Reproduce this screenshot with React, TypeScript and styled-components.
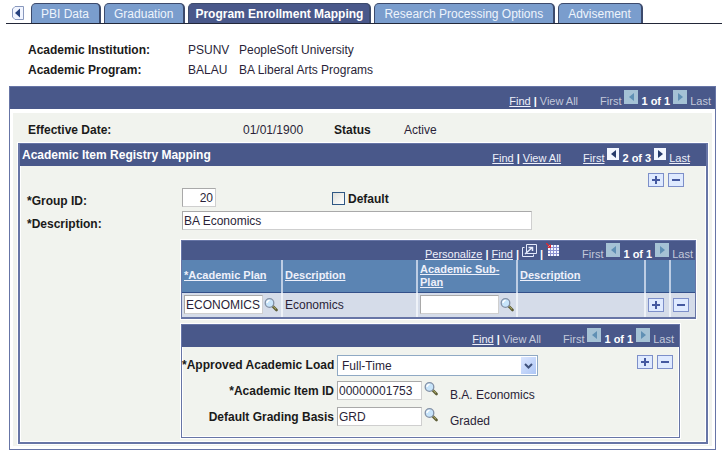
import React from "react";
import styled, { createGlobalStyle, css } from "styled-components";

const NAVY = "#49588a";
const EDGE = "#6775a6";
const PAPER = "#f1f3ee";

const GlobalStyle = createGlobalStyle`
  * { box-sizing: border-box; }
  body {
    margin: 0;
    background: #fff;
    color: #2a1f38;
    font: 12px/16px "Liberation Sans", Arial, sans-serif;
  }
  input, select, button { font: inherit; color: inherit; margin: 0; }
`;

const Page = styled.div`
  padding: 3px 3px 0 6px;
`;

const TabBar = styled.nav`
  display: flex;
  align-items: flex-end;
  gap: 3px;
  height: 21px;
  border-bottom: 1px solid #222738;
`;

const ScrollButton = styled.button`
  display: flex;
  align-self: flex-start;
  margin: 3px 4px 0 6px;
  padding: 0;
  border: 0;
  background: none;
`;

const Tab = styled.button<{ $active?: boolean }>`
  height: 20px;
  padding: ${(p) => (p.$active ? "2px 6px" : "2px 10px 2px 9px")};
  border: 1px solid #3c4a6c;
  border-right-width: 2px;
  border-bottom: 0;
  border-radius: 5px 5px 0 0;
  background: ${(p) => (p.$active ? NAVY : "#7a9dcd")};
  color: ${(p) => (p.$active ? "#fff" : "#eef4fc")};
  font-weight: ${(p) => (p.$active ? "bold" : "normal")};
  line-height: 16px;
  text-align: left;
  white-space: nowrap;
`;

const Summary = styled.dl`
  display: grid;
  grid-template-columns: 160px 51px 1fr;
  row-gap: 4px;
  margin: 18px 0 8px 22px;
`;

const Term = styled.dt`
  font-weight: bold;
  color: #1a1a1a;
`;

const Value = styled.dd`
  margin: 0;
`;

const Panel = styled.section<{ $kind: "outer" | "middle" | "inner" }>`
  border: 1px solid ${EDGE};
  background: ${(p) => (p.$kind === "outer" ? "#fff" : PAPER)};
  ${(p) =>
    p.$kind === "outer" &&
    css`
      margin: 0 6px 0 3px;
      padding-bottom: 3px;
    `}
  ${(p) =>
    p.$kind === "middle" &&
    css`
      margin: 0 4px 0 5px;
      border-width: 1px 2px 2px;
      box-shadow: 0 0 0 1px #fff, inset 0 0 0 1px #fff;
    `}
  ${(p) =>
    p.$kind === "inner" &&
    css`
      margin: 5px 26px 4px 161px;
      box-shadow: 0 0 0 1px #fff, inset 0 0 0 1px #fff;
    `}
`;

const Bar = styled.header<{ $end: number; $short?: boolean }>`
  display: flex;
  align-items: center;
  justify-content: flex-end;
  height: ${(p) => (p.$short ? 19 : 22)}px;
  padding: 0 ${(p) => p.$end}px 0 2px;
  background: ${NAVY};
  color: #fff;
  font-size: 11px;
  white-space: nowrap;
`;

const BarTitle = styled.h2`
  margin: 0 auto 0 0;
  font-size: 12px;
`;

const NavGroup = styled.div`
  display: flex;
  align-items: center;
  gap: 3px;
  padding-top: 6px;
  & + & { margin-left: 22px; }
`;

const NavLink = styled.a`
  color: #eef0fa;
  text-decoration: underline;
  text-underline-offset: 1px;
`;

const Muted = styled.span`
  color: #c3c8da;
`;

const IconButton = styled.button<{ $off?: boolean }>`
  display: flex;
  align-items: center;
  justify-content: center;
  width: ${(p) => (p.$off ? 14 : 12)}px;
  height: ${(p) => (p.$off ? 14 : 12)}px;
  margin-bottom: 8px;
  padding: 0;
  border: 0;
  background: ${(p) => (p.$off ? "#a5c2d5" : "#f2f6ff")};
`;

const ToolButton = styled.button`
  display: flex;
  margin-bottom: 7px;
  padding: 0;
  border: 0;
  background: none;
`;

const OuterBody = styled.div`
  margin: 4px 3px 0;
  padding: 8px 0 2px;
  background: ${PAPER};
`;

const StatusRow = styled.div`
  display: grid;
  grid-template-columns: 215px 91px 70px 1fr;
  padding: 1px 0 5px 15px;
`;

const Label = styled.label`
  font-weight: bold;
  color: #1a1a1a;
  white-space: nowrap;
`;

const Buttons = styled.div`
  display: flex;
  justify-content: flex-end;
  gap: 4px;
`;

const MappingButtons = styled(Buttons)`
  padding: 7px 22px 0 0;
`;

const SquareButton = styled.button`
  display: flex;
  align-items: center;
  justify-content: center;
  width: 16px;
  height: 14px;
  padding: 0;
  border: 1px solid #7d8fc9;
  background: #dfeaff;
`;

const MappingForm = styled.div`
  display: grid;
  grid-template-columns: 155px 150px 1fr;
  row-gap: 2px;
  padding: 1px 0 0 7px;
`;

const FormLabel = styled(Label)`
  padding-top: 5px;
`;

const TextBox = styled.input<{ $w: number }>`
  width: ${(p) => p.$w}px;
  height: 19px;
  padding: 0 0 0 1px;
  border: 1px solid #a9a9a9;
  border-right-color: #cfcfcf;
  border-bottom-color: #cfcfcf;
  border-radius: 0;
  background: #fff;
  outline: 0;
`;

const NumberBox = styled(TextBox)`
  padding-right: 2px;
  text-align: right;
`;

const WideCell = styled.div`
  grid-column: 2 / 4;
`;

const CheckLabel = styled(Label)`
  display: flex;
  align-items: center;
  gap: 3px;
`;

const CheckBox = styled.input`
  appearance: none;
  width: 13px;
  height: 13px;
  border: 1px solid #2f5784;
  background: linear-gradient(135deg, #dfdfda, #fff);
`;

const GridPanel = styled.section`
  margin: 8px 10px 0 161px;
  border: 1px solid ${EDGE};
  border-bottom-width: 2px;
  box-shadow: 0 0 0 1px #fff;
`;

const DataTable = styled.table`
  width: 100%;
  table-layout: fixed;
  border-collapse: collapse;
  th, td {
    padding: 0 2px;
    border-right: 2px solid #eef2f8;
    text-align: left;
  }
  th:last-child, td:last-child { border-right: 0; }
  th {
    height: 32px;
    background: #5b84b3;
    border-right-color: #bdcde4;
    border-bottom: 1px solid #33508a;
    font-size: 11px;
    line-height: 13px;
  }
  td {
    height: 25px;
    background: #d5dce9;
  }
`;

const LookupCell = styled.div`
  display: flex;
  align-items: center;
  gap: 1px;
`;

const LookupButton = styled.button`
  display: flex;
  padding: 0;
  border: 0;
  background: none;
`;

const LoadForm = styled.div`
  display: grid;
  grid-template-columns: 152px 1fr auto;
  gap: 5px 3px;
  padding: 8px 6px 9px 0;
  > label { text-align: right; padding-top: 2px; }
`;

const Picker = styled.div`
  position: relative;
  width: 201px;
  select {
    display: block;
    appearance: none;
    width: 100%;
    height: 21px;
    padding: 0 22px 0 4px;
    border: 1px solid #8fa9c4;
    border-radius: 0;
    background: #fff;
  }
`;

const PickerArrow = styled.span`
  position: absolute;
  top: 2px;
  right: 2px;
  display: flex;
  align-items: center;
  justify-content: center;
  width: 15px;
  height: 17px;
  background: linear-gradient(135deg, #dbe6ff, #adc6f5);
  pointer-events: none;
`;

const ItemRow = styled.div`
  grid-column: 2 / 4;
  display: flex;
  align-items: flex-start;
  gap: 2px;
`;

const ItemText = styled.span`
  padding: 8px 0 0 10px;
  line-height: 13px;
`;

const Arrow = ({ next, off }: { next?: boolean; off?: boolean }) => (
  <IconButton $off={off} disabled={off} aria-label={next ? "Next row" : "Previous row"}>
    <svg width="5" height="8" viewBox="0 0 5 8">
      <path d={next ? "M0 0 5 4 0 8Z" : "M5 0 0 4 5 8Z"} fill={off ? "#6090b4" : "#263a6b"} />
    </svg>
  </IconButton>
);

const Pager = ({ text, live }: { text: string; live?: boolean }) => (
  <NavGroup>
    {live ? <NavLink href="#first">First</NavLink> : <Muted>First</Muted>}
    <Arrow off={!live} />
    <b>{text}</b>
    <Arrow next off={!live} />
    {live ? <NavLink href="#last">Last</NavLink> : <Muted>Last</Muted>}
  </NavGroup>
);

const FindGroup = ({ live }: { live?: boolean }) => (
  <NavGroup>
    <NavLink href="#find">Find</NavLink>
    <b>|</b>
    {live ? <NavLink href="#all">View All</NavLink> : <Muted>View All</Muted>}
  </NavGroup>
);

const AddRemove = ({ remove }: { remove?: boolean }) => (
  <SquareButton aria-label={remove ? "Delete row" : "Add row"}>
    <svg width="8" height="8" viewBox="0 0 8 8">
      <path d={remove ? "M0 4H8" : "M0 4H8M4 0V8"} stroke="#4559a0" strokeWidth="2" />
    </svg>
  </SquareButton>
);

const Lookup = ({ label }: { label: string }) => (
  <LookupButton aria-label={label}>
    <svg width="14" height="15" viewBox="0 0 14 15">
      <path d="M8.5 9 12.5 13" stroke="#5d5d36" strokeWidth="2.6" strokeLinecap="round" />
      <path d="M9.2 9.4 12 12.2" stroke="#b5b36a" strokeWidth="1" />
      <circle cx="5.5" cy="6" r="4.3" fill="#c7e4fa" stroke="#8290a6" strokeWidth="1.3" />
      <path d="M3 6a2.6 2.6 0 0 1 2.6-2.6" fill="none" stroke="#fff" strokeWidth="1.4" />
    </svg>
  </LookupButton>
);

const PopOutIcon = () => (
  <svg width="15" height="13" viewBox="0 0 15 13" fill="none" stroke="#e4eafc">
    <path d="M4.5.5h10v9h-10Z" />
    <path d="M2.5 3.5h-2v9h11v-2" />
    <path d="M3 10 10 3.8M6.5 3.5H10.5V7" strokeWidth="1.5" />
  </svg>
);

const SheetIcon = () => (
  <svg width="14" height="14" viewBox="0 0 14 14">
    <path d="M2 2h11v11H2Z" fill="#f3f5ff" />
    <path d="M4.5 2v11M7.5 2v11M10.5 2v11M2 4.5h11M2 7.5h11M2 10.5h11" stroke="#8990d0" />
    <path d="M0 0 3 3" stroke="#d92b35" strokeWidth="1.5" />
    <path d="M5 1v4H1Z" fill="#d92b35" />
  </svg>
);

const tabs = ["PBI Data", "Graduation", "Program Enrollment Mapping", "Research Processing Options", "Advisement"];

export default function App() {
  return (
    <>
      <GlobalStyle />
      <Page>
        <TabBar>
          <ScrollButton aria-label="Previous tabs">
            <svg width="12" height="14" viewBox="0 0 12 14">
              <path d="M3 .5H11.5V13.5H3L.5 11V3Z" fill="#f1f5ff" stroke="#8998bd" />
              <path d="M8 2.5V11.5L3 7Z" fill="#27427e" />
            </svg>
          </ScrollButton>
          {tabs.map((name) => (
            <Tab key={name} $active={name === "Program Enrollment Mapping"}>{name}</Tab>
          ))}
        </TabBar>

        <Summary>
          <Term>Academic Institution:</Term>
          <Value>PSUNV</Value>
          <Value>PeopleSoft University</Value>
          <Term>Academic Program:</Term>
          <Value>BALAU</Value>
          <Value>BA Liberal Arts Programs</Value>
        </Summary>

        <Panel $kind="outer">
          <Bar $end={4}>
            <FindGroup />
            <Pager text="1 of 1" />
          </Bar>
          <OuterBody>
            <StatusRow>
              <Label as="span">Effective Date:</Label>
              <span>01/01/1900</span>
              <Label as="span">Status</Label>
              <span>Active</span>
            </StatusRow>

            <Panel $kind="middle">
              <Bar $end={16}>
                <BarTitle>Academic Item Registry Mapping</BarTitle>
                <FindGroup live />
                <Pager text="2 of 3" live />
              </Bar>
              <MappingButtons>
                <AddRemove />
                <AddRemove remove />
              </MappingButtons>
              <MappingForm>
                <FormLabel htmlFor="group">*Group ID:</FormLabel>
                <div>
                  <NumberBox id="group" $w={34} defaultValue="20" />
                </div>
                <CheckLabel>
                  <CheckBox type="checkbox" />
                  Default
                </CheckLabel>
                <FormLabel htmlFor="desc">*Description:</FormLabel>
                <WideCell>
                  <TextBox id="desc" $w={350} defaultValue="BA Economics" />
                </WideCell>
              </MappingForm>

              <GridPanel>
                <Bar $end={2} $short>
                  <NavGroup>
                    <NavLink href="#personalize">Personalize</NavLink>
                    <b>|</b>
                    <NavLink href="#find">Find</NavLink>
                    <b>|</b>
                    <ToolButton aria-label="Open in new window"><PopOutIcon /></ToolButton>
                    <b>|</b>
                    <ToolButton aria-label="Download"><SheetIcon /></ToolButton>
                  </NavGroup>
                  <Pager text="1 of 1" />
                </Bar>
                <DataTable>
                  <colgroup>
                    <col width="100" />
                    <col width="135" />
                    <col width="100" />
                    <col />
                    <col width="25" />
                    <col width="25" />
                  </colgroup>
                  <thead>
                    <tr>
                      <th><NavLink href="#plan">*Academic Plan</NavLink></th>
                      <th><NavLink href="#plan-description">Description</NavLink></th>
                      <th><NavLink href="#sub-plan">Academic Sub-Plan</NavLink></th>
                      <th><NavLink href="#sub-description">Description</NavLink></th>
                      <th />
                      <th />
                    </tr>
                  </thead>
                  <tbody>
                    <tr>
                      <td>
                        <LookupCell>
                          <TextBox $w={79} aria-label="Academic Plan" defaultValue="ECONOMICS" />
                          <Lookup label="Look up academic plan" />
                        </LookupCell>
                      </td>
                      <td>Economics</td>
                      <td>
                        <LookupCell>
                          <TextBox $w={79} aria-label="Academic Sub-Plan" />
                          <Lookup label="Look up academic sub-plan" />
                        </LookupCell>
                      </td>
                      <td />
                      <td><AddRemove /></td>
                      <td><AddRemove remove /></td>
                    </tr>
                  </tbody>
                </DataTable>
              </GridPanel>

              <Panel $kind="inner">
                <Bar $end={5}>
                  <FindGroup />
                  <Pager text="1 of 1" />
                </Bar>
                <LoadForm>
                  <Label htmlFor="load">*Approved Academic Load</Label>
                  <Picker>
                    <select id="load" defaultValue="Full-Time">
                      <option>Full-Time</option>
                    </select>
                    <PickerArrow>
                      <svg width="9" height="6" viewBox="0 0 9 6">
                        <path d="M1 1 4.5 4.5 8 1" fill="none" stroke="#3f527c" strokeWidth="2" />
                      </svg>
                    </PickerArrow>
                  </Picker>
                  <Buttons>
                    <AddRemove />
                    <AddRemove remove />
                  </Buttons>
                  <Label htmlFor="item">*Academic Item ID</Label>
                  <ItemRow>
                    <TextBox id="item" $w={85} defaultValue="00000001753" />
                    <Lookup label="Look up academic item" />
                    <ItemText>B.A. Economics</ItemText>
                  </ItemRow>
                  <Label htmlFor="basis">Default Grading Basis</Label>
                  <ItemRow>
                    <TextBox id="basis" $w={85} defaultValue="GRD" />
                    <Lookup label="Look up grading basis" />
                    <ItemText>Graded</ItemText>
                  </ItemRow>
                </LoadForm>
              </Panel>
            </Panel>
          </OuterBody>
        </Panel>
      </Page>
    </>
  );
}
